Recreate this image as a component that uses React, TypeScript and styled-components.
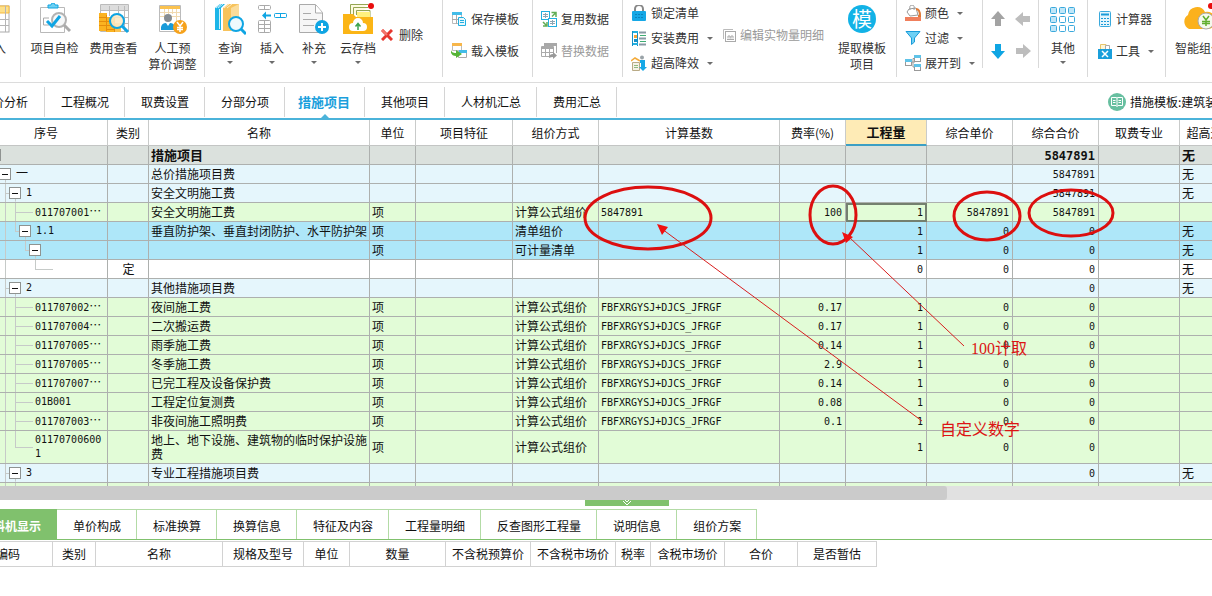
import React from "react";
import styled, { createGlobalStyle, css } from "styled-components";

const LINE = "#adb0ae";
const BLUE = "#0fa5e3";
const MONO = `"DejaVu Sans Mono", "Noto Sans CJK SC", monospace`;

const Global = createGlobalStyle`
  *, *::before, *::after { box-sizing: border-box; }
  body {
    margin: 0;
    overflow: hidden;
    background: #fff;
    color: #111;
    font: 12px/16px "Noto Sans CJK SC", "Liberation Sans", sans-serif;
  }
  button { font: inherit; color: inherit; background: none; border: 0; padding: 0; cursor: pointer; }
`;

const Shell = styled.main`
  display: flex;
  flex-direction: column;
  margin-left: -36px;
  overflow: hidden;
`;

/* ---------- ribbon ---------- */

const Ribbon = styled.header`
  display: flex;
  height: 83px;
  border-bottom: 1px solid #dcdcdc;
  color: #333;
`;

const Group = styled.section<{ $w: number; $pad?: number; $short?: boolean }>`
  display: flex;
  flex: none;
  width: ${(p) => p.$w}px;
  height: ${(p) => (p.$short ? 68 : 77)}px;
  padding-left: ${(p) => p.$pad ?? 0}px;
  border-right: 1px solid #d9d9d9;
  white-space: nowrap;
`;

const LastGroup = styled(Group)`
  border-right: 0;
`;

const BigButton = styled.button<{ $w: number }>`
  display: flex;
  flex: none;
  flex-direction: column;
  align-items: center;
  justify-content: flex-start;
  width: ${(p) => p.$w}px;
  padding-top: 3px;
  text-align: center;
  svg.pic { flex: none; margin-bottom: 5px; }
`;

const Stack = styled.div<{ $gap: number; $top: number; $w?: number }>`
  display: flex;
  flex: none;
  flex-direction: column;
  align-items: flex-start;
  gap: ${(p) => p.$gap}px;
  width: ${(p) => (p.$w ? `${p.$w}px` : "auto")};
  padding-top: ${(p) => p.$top}px;
`;

const SmallButton = styled.button<{ $gap?: number }>`
  display: flex;
  align-items: center;
  gap: ${(p) => p.$gap ?? 4}px;
  height: 16px;
  &:disabled { color: #9a9a9a; }
`;

const Caret = styled.span<{ $below?: boolean }>`
  width: 0;
  height: 0;
  border: 3px solid transparent;
  border-top-color: #6c6c6c;
  border-bottom: 0;
  ${(p) => (p.$below ? "margin-top: 5px;" : "margin-left: 4px;")}
`;

const MoveGrid = styled.div`
  display: grid;
  grid-template-columns: 25px 25px;
  grid-template-rows: 32px 32px;
  padding-top: 3px;
  button { display: flex; align-items: center; justify-content: center; }
`;

/* ---------- page tabs ---------- */

const TabBar = styled.nav`
  display: flex;
  height: 37px;
  padding-top: 4px;
  border-bottom: 2px solid #4bb3da;
`;

const Tab = styled.button<{ $active?: boolean }>`
  position: relative;
  flex: none;
  height: 30px;
  padding: 0 15px 0 16px;
  border-right: 1px solid #d4d4d4;
  &:first-child { padding-right: 16px; }
  ${(p) =>
    p.$active &&
    css`
      padding: 0 14px 0 13px;
      color: #1b9fdc;
      font-size: 13px;
      font-weight: 700;
      &::after {
        content: "";
        position: absolute;
        left: calc(50% - 4px);
        bottom: -1px;
        border: 4px solid transparent;
        border-top: 0;
        border-bottom-color: #4bb3da;
      }
    `}
`;

const Template = styled.div`
  display: flex;
  align-items: center;
  gap: 4px;
  width: 104px;
  height: 30px;
  margin-left: auto;
  overflow: hidden;
  white-space: nowrap;
  svg { flex: none; }
`;

/* ---------- main grid ---------- */

const GridView = styled.section`
  position: relative;
  height: 366px;
  overflow: hidden;
`;

const Grid = styled.table`
  width: 100%;
  min-width: 1551px;
  table-layout: fixed;
  border-collapse: separate;
  border-spacing: 0;
`;

const HeadCell = styled.th<{ $on?: boolean }>`
  height: 26px;
  padding: 0;
  overflow: hidden;
  border-right: 1px solid #c9cbca;
  border-bottom: 1px solid #c3c5c4;
  font-weight: 400;
  white-space: nowrap;
  ${(p) =>
    p.$on &&
    css`
      background: #feebb6;
      border-bottom: 2px solid #3d9fc4;
      font-size: 13px;
      font-weight: 700;
    `}
`;

type Tone = "gray" | "pale" | "green" | "blue" | "white";
const tones: Record<Tone, string> = {
  gray: "#dbe1dd",
  pale: "#e5f6fc",
  green: "#e2fcd7",
  blue: "#aee7f9",
  white: "#ffffff",
};

const Row = styled.tr<{ $tone: Tone; $tall?: boolean }>`
  height: ${(p) => (p.$tall ? 33 : 19)}px;
  background: ${(p) => tones[p.$tone]};
  font-size: ${(p) => (p.$tone === "gray" ? 13 : 12)}px;
  font-weight: ${(p) => (p.$tone === "gray" ? 700 : 400)};
`;

const Cell = styled.td<{ $align?: "right" | "center"; $selected?: boolean }>`
  padding: ${(p) => (p.$align === "right" ? "0 3px 0 2px" : "0 1px 0 2px")};
  overflow: hidden;
  border-right: 1px solid ${LINE};
  border-bottom: 1px solid ${LINE};
  line-height: 14px;
  text-align: ${(p) => p.$align ?? "left"};
  ${(p) => p.$selected && "outline: 2px solid #74806f; outline-offset: -2px;"}
`;

const Mono = styled.span`
  font-family: ${MONO};
  font-size: 10px;
  ${Row}[data-total="true"] & { font-size: 12px; }
`;

/* Each guide is a one-pixel line: left, top, width, height. */
type Guide = [string, string, string, string];

const TreeCell = styled(Cell)<{ $indent: number; $guides: Guide[] }>`
  padding: 0 0 0 ${(p) => p.$indent}px;
  background-image: ${(p) =>
    p.$guides.length
      ? p.$guides.map(() => "linear-gradient(#c6cac8, #c6cac8)").join(",")
      : "none"};
  background-repeat: no-repeat;
  background-position: ${(p) => p.$guides.map((g) => `${g[0]} ${g[1]}`).join(",") || "0 0"};
  background-size: ${(p) => p.$guides.map((g) => `${g[2]} ${g[3]}`).join(",") || "auto"};
`;

const TreeLine = styled.div`
  display: flex;
  align-items: center;
  gap: 5px;
  font-family: ${MONO};
  font-size: 10px;
`;

const Toggle = styled.button`
  flex: none;
  width: 12px;
  height: 12px;
  border: 1px solid #8f9391;
  background: linear-gradient(#111, #111) center / 6px 1px no-repeat #fff;
`;

const Han = styled.span`
  font-family: "Noto Sans CJK SC", sans-serif;
  font-size: 12px;
`;

const Marks = styled.svg`
  position: absolute;
  left: 0;
  top: 0;
  pointer-events: none;
`;

const Note = styled.span<{ $x: number; $y: number }>`
  position: absolute;
  left: ${(p) => p.$x}px;
  top: ${(p) => p.$y}px;
  color: #dc1414;
  font-family: "Liberation Serif", "Noto Sans CJK SC", serif;
  font-size: 16px;
  line-height: 20px;
  white-space: nowrap;
`;

const ScrollTrack = styled.div`
  height: 14px;
  padding-left: 16px;
  background: #e1e1e1;
`;

const ScrollThumb = styled.div`
  width: calc(100% - 265px);
  min-width: 40px;
  height: 14px;
  border-radius: 0 3px 3px 0;
  background: #cbcbcb;
`;

/* ---------- detail panel ---------- */

const Splitter = styled.button`
  display: flex;
  justify-content: center;
  width: 84px;
  height: 6px;
  margin-left: calc(50% - 3px);
  background: #80c16d;
`;

const DetailTabs = styled.nav`
  display: flex;
  height: 31px;
  margin-top: 3px;
  border-bottom: 1px solid #80c16d;
`;

const DetailTab = styled.button<{ $active?: boolean }>`
  flex: none;
  height: 30px;
  padding: 3px 15px 0 16px;
  border-top: 1px solid #b3dba6;
  border-right: 1px solid #b3dba6;
  ${(p) =>
    p.$active &&
    css`
      padding-left: 17px;
      background: #80c16d;
      border-color: #80c16d;
      color: #fff;
      font-weight: 700;
    `}
`;

const DetailGrid = styled.table`
  width: 913px;
  margin-top: 1px;
  table-layout: fixed;
  border-collapse: separate;
  border-spacing: 0;
`;

const DetailHead = styled.th`
  height: 26px;
  padding: 0;
  border: 1px solid #d2d2d2;
  border-left: 0;
  font-weight: 400;
  white-space: nowrap;
`;

/* ---------- icons ---------- */

const Pic = ({ w = 32, h = 32, children }: { w?: number; h?: number; children: React.ReactNode }) => (
  <svg className="pic" width={w} height={h} viewBox={`0 0 ${w} ${h}`} fill="none" aria-hidden="true">
    {children}
  </svg>
);

const ImportIcon = () => (
  <Pic>
    <rect x="3" y="3" width="28" height="26" fill="#fff" stroke="#aaa" />
    <path d="M3 3h28v7H3z" fill="#fde08a" stroke="#f5b93e" />
    <path d="M3 16.500h28M3 22.500h28M12.500 10v19M21.500 3v26M27.500 3v26" stroke="#b5b5b5" />
  </Pic>
);

const CheckIcon = () => (
  <Pic>
    <path d="M1.500 4.500h24v25h-24z" stroke="#b9b9b9" />
    <path d="M9 2h3a2 2 0 0 1 4 0h3v3H9z" fill="#6fd0f2" stroke={BLUE} />
    <path d="M10 15H4.500v7H10" stroke="#aaa" />
    <circle cx="20" cy="17" r="7" fill="#f6f8f9" stroke="#b3b3b3" strokeWidth="2" />
    <path d="M25 22l6 6" stroke="#aaa" strokeWidth="3" />
    <path d="M8 18l5 5 8-10" stroke={BLUE} strokeWidth="3" />
  </Pic>
);

const CostIcon = () => (
  <Pic>
    <path d="M2.500 1.500h28v27h-28z" fill="#fff" stroke="#bbb" />
    <path d="M3 2h27v5H3z" fill="#ddd" />
    <path d="M3 7.500h27M10 14.500h20M20 20.500h10M11.500 3v10M20.500 3v10M26.500 3v25" stroke="#bbb" />
    <path d="M1 10h8v18H1z" fill="#fbb320" />
    <path d="M8 14h8v15H8z" fill="#fbb320" />
    <path d="M16 20h7v9h-7z" fill="#fbc24e" />
    <path d="M1 14.500h8M1 18.500h8M1 22.500h8M8 18.500h8M8 22.500h8M8 26.500h8M8.500 12v16M16.500 15v14" stroke="#e58d0c" />
    <circle cx="19" cy="18" r="7" fill="#fde9c4" fillOpacity=".9" stroke={BLUE} strokeWidth="2" />
    <path d="M24 23l6 6" stroke={BLUE} strokeWidth="3" />
  </Pic>
);

const LaborIcon = () => (
  <Pic>
    <path d="M2.500 2.500h21v26h-21z" fill="#fff" stroke="#bbb" />
    <path d="M3 3h20v3H3z" fill="#fbc24e" />
    <path d="M3 9.500h20M3 13.500h20M7.500 6v9M11.500 6v5M15.500 6v5M19.500 6v12" stroke="#f0d9b0" />
    <circle cx="11" cy="15" r="4" fill="#878d92" />
    <path d="M4 27v-3q1-4 5-4l2 3 2-3q4 0 5 4v3z" fill="#199bd9" />
    <circle cx="23" cy="24" r="7" fill="#f6a21c" />
    <path d="M20 19l3 4 3-4M23 23v6M20 24.500h6M20 26.500h6" stroke="#fff" strokeWidth="1.500" />
  </Pic>
);

const QueryIcon = () => (
  <Pic>
    <path d="M1 5l5-4h5L7 5v22H1z" fill="#1cb5e8" />
    <path d="M2 5l5-4M4 5l5-4M5.500 6v20" stroke="#c9effb" />
    <path d="M9 5l5-4h11v18l-4 9H9z" fill="#f7c35c" />
    <path d="M10 5l5-4M13 5l5-4" stroke="#fdebc4" />
    <path d="M17 5l8-4v23l-8 4z" fill="#fbdc9a" />
    <circle cx="22" cy="21" r="7" fill="#eef9fd" stroke={BLUE} strokeWidth="2" />
    <path d="M27 26l5 5" stroke={BLUE} strokeWidth="3" />
  </Pic>
);

const InsertIcon = () => (
  <Pic>
    <rect x="2.500" y="2.500" width="12" height="4" rx="1" stroke="#aaa" />
    <path d="M8.500 3v4" stroke="#aaa" />
    <path d="M6 12.500l4-4v3h5v2h-5v3z" fill={BLUE} />
    <rect x="18.500" y="10.500" width="12" height="4" rx="1" stroke={BLUE} />
    <path d="M24.500 11v4" stroke={BLUE} />
    <rect x="2.500" y="17.500" width="12" height="12" rx="1" stroke="#aaa" />
    <path d="M2 21.500h13M2 25.500h13M8.500 17v13" stroke="#aaa" />
  </Pic>
);

const AddIcon = () => (
  <Pic>
    <path d="M1.500 1.500h16l7 8v20h-23z" fill="#f6f6f6" stroke="#aaa" />
    <path d="M17.500 2v8h7" fill="#fff" stroke="#aaa" />
    <path d="M5 10.500h8M5 16.500h14M5 22.500h11" stroke="#aaa" />
    <circle cx="24" cy="24" r="7" fill={BLUE} />
    <path d="M20 24h8M24 20v8" stroke="#fff" strokeWidth="2" />
  </Pic>
);

const CloudIcon = () => (
  <Pic>
    <path d="M8.500 12V1.500H26M11.500 12V4.500H26M14.500 12V7.500H28V14" fill="#fffbe0" stroke="#95a653" />
    <path d="M15 9h13v6H15z" fill="#fff17d" />
    <path d="M1 11h10l3 3h17v17H1z" fill="#fbb516" />
    <path d="M11 28a4 4 0 0 1 0-8 5 5 0 0 1 10 0 4 4 0 0 1 0 8z" fill="#fff" />
    <path d="M16 27v-6M13.500 23.500l2.500-3 2.500 3" stroke="#3ca34d" strokeWidth="1.500" />
    <circle cx="29" cy="3" r="3" fill="#e80d0d" />
  </Pic>
);

const DeleteIcon = () => (
  <Pic w={12} h={12}>
    <path d="M1 1l10 10M11 1L1 11" stroke="#e6362e" strokeWidth="3" />
    <path d="M6 6L1 1" stroke="#f47a70" strokeWidth="2" />
  </Pic>
);

const SaveTplIcon = () => (
  <Pic w={16} h={16}>
    <path d="M1.500 1.500h9v11h-9z" fill="#fff" stroke="#bbb" />
    <path d="M1 1h10v3H1z" fill="#43bce8" />
    <path d="M1 8.500h7M5.500 4v9" stroke="#aaa" />
    <path d="M7.500 6.500h5l2 2v6h-7z" fill="#e9f8fd" stroke="#22afe0" />
    <path d="M9 9.500h4M9 11.500h4" stroke="#22afe0" />
  </Pic>
);

const LoadTplIcon = () => (
  <Pic w={16} h={16}>
    <path d="M1.500 1.500h9v6h-9z" fill="#fff" stroke="#bbb" />
    <path d="M1 0h10v3H1z" fill="#f7b64a" />
    <path d="M7.500 8.500h8v6h-8z" fill="#fff" stroke="#aaa" />
    <path d="M8 7h8v3H8z" fill="#43bce8" />
    <path d="M0 6c0 3 2 4 5 4V7l6 4-6 4v-2c-4 0-6-3-5-7z" fill="#55b336" />
  </Pic>
);

const ReuseIcon = () => (
  <Pic w={16} h={16}>
    <rect x=".5" y=".5" width="8" height="8" fill="#fff" stroke="#22afe0" />
    <rect x="7.500" y="7.500" width="8" height="8" fill="#fff" stroke="#22afe0" />
    <path d="M2 3.500h5M2 5.500h5M9 10.500h5M9 12.500h5M4.500 2v5M11.500 9v5" stroke="#8fa6b3" />
    <path d="M10.500 1.500H15V6M15 1.500l-4 4M2 11l3.500 3.500M6 11v4H2" stroke="#62ad55" strokeWidth="1.500" />
  </Pic>
);

const ReplaceIcon = () => (
  <Pic w={16} h={16}>
    <path d="M.5 3.500h12v10H.5z" fill="#fff" stroke="#aaa" />
    <path d="M3 .5h12.500V10" stroke="#aaa" />
    <path d="M3 0h13v3H3zM0 4h13v2H0z" fill="#a8a8a8" />
    <path d="M1 9.500h11M4.500 4v9M8.500 4v9" stroke="#aaa" />
    <path d="M8 15q0-4 4-4V9l4 3.500-4 3.500v-2q-2 0-4 1z" fill="#999" />
  </Pic>
);

const LockIcon = () => (
  <Pic w={16} h={16}>
    <path d="M4 7V4a4 4 0 0 1 8 0v3" stroke="#888" strokeWidth="2" />
    <rect x="1" y="6" width="14" height="10" rx="1" fill="#16a8e6" />
    <path d="M4 9.500h8M4 12.500h8" stroke="#0c84bd" strokeDasharray="2 1" />
  </Pic>
);

const InstallIcon = () => (
  <Pic w={16} h={16}>
    <path d="M1.500 1v15M6.500 1v15" stroke="#168fc6" />
    <path d="M2 2h5M2 14h5" stroke="#22afe0" strokeWidth="2" />
    <path d="M3 5h3v3H3z" fill="#f7a63a" />
    <path d="M3 9h3v3H3z" fill="#168fc6" />
    <path d="M8 2.500h7M8 8.500h7M8 14.500h7" stroke="#8a9aa5" strokeWidth="2" />
    <path d="M9 5.500h6M9 11.500h6" stroke="#3fae74" />
  </Pic>
);

const TallIcon = () => (
  <Pic w={16} h={16}>
    <path d="M1.500 7.500h7v8h-7z" fill="#f5f1e6" stroke="#b9aa86" />
    <path d="M0 6l4-3 5 3" stroke="#f4ab3a" strokeWidth="1.500" />
    <path d="M3 10.500h4M3 12.500h4" stroke="#8fb980" />
    <circle cx="11" cy="2.500" r="2" fill="#9aa3a8" />
    <path d="M9 5h5v3H9zM10 8h4v4h2l-4 4-4-4h2z" fill="#16a8e6" />
  </Pic>
);

const EditQtyIcon = () => (
  <Pic w={13} h={13}>
    <path d="M10 .5H.5V10" stroke="#bbb" />
    <rect x="2.500" y="2.500" width="10" height="10" stroke="#aaa" />
    <path d="M5 9.500V7h2v2.500M8 9.500V7h2v2.500M4 10.500h7" stroke="#aaa" />
  </Pic>
);

const Disc = styled.span`
  display: grid;
  place-items: center;
  width: 28px;
  height: 28px;
  margin: 2px 0 7px;
  border-radius: 50%;
  background: #12b2e6;
  color: #fff;
  font-size: 20px;
  line-height: 28px;
`;

const ColorIcon = () => (
  <Pic w={16} h={16}>
    <path d="M4 4l7-1 2 7-8 1-3-4z" fill="#fff" stroke="#999" />
    <path d="M5 5q-1-5 2-5t2 5" stroke="#999" />
    <path d="M11 4q4 0 4 7h-2" stroke="#e07a35" strokeWidth="2" />
    <path d="M0 12h16v4H0z" fill="#f07f5c" />
  </Pic>
);

const FilterIcon = () => (
  <Pic w={16} h={16}>
    <path d="M1 1.500h14L9.500 8v4l-3 2.500V8z" fill="#6fd0f4" stroke="#199bd9" />
  </Pic>
);

const ExpandIcon = () => (
  <Pic w={16} h={16}>
    <path d="M6 7h4M8 3.500v8.500M8 3.500h2M8 12h2" stroke="#999" />
    <rect x=".5" y="4.500" width="6" height="6" fill="#fff" stroke="#999" />
    <rect x="9.500" y=".5" width="6" height="6" fill="#fff" stroke="#999" />
    <rect x="9.500" y="9.500" width="6" height="6" fill="#fff" stroke="#999" />
    <path d="M0 4h7v3H0zM9 0h7v3H9zM9 9h7v3H9z" fill="#5fc3e8" />
  </Pic>
);

const MoveArrow = ({ turn, color }: { turn: number; color: string }) => (
  <Pic w={16} h={16}>
    <path d="M8 0l7 8h-4v7H5V8H1z" fill={color} transform={`rotate(${turn} 8 8)`} />
  </Pic>
);

const TilesIcon = () => (
  <Pic w={26} h={32}>
    {[0, 9, 18].map((y) =>
      [0, 9, 18].map((x) => (
        <rect
          key={`${x}-${y}`}
          x={x + 0.5}
          y={y + 4.5}
          width="6"
          height="6"
          rx="1"
          fill={x === 0 || y === 0 ? "#bfe6f8" : "#fff"}
          stroke="#3aa9dc"
        />
      )),
    )}
  </Pic>
);

const CalcIcon = () => (
  <Pic w={14} h={16}>
    <rect x="1.500" y=".5" width="11" height="15" rx="1" fill="#e4f5fc" stroke="#3aa9dc" />
    <path d="M3 3.500h8" stroke="#199bd9" strokeWidth="2" />
    <path d="M3 7.500h8M3 10.500h8M3 13.500h8" stroke="#199bd9" strokeDasharray="2 1" />
  </Pic>
);

const ToolIcon = () => (
  <Pic w={14} h={16}>
    <path d="M2.500 6V1.500H8V6" fill="#fff7d6" stroke="#e8c56a" />
    <path d="M7.500 6V2.500h4V6" fill="#fff" stroke="#aaa" />
    <path d="M0 6h14v10H0z" fill="#1a9fdb" />
    <path d="M4 8l6 6M10 8l-6 6" stroke="#fff" strokeWidth="1.500" />
  </Pic>
);

const SmartIcon = () => (
  <Pic w={36}>
    <path d="M8 26a8 8 0 0 1-1-14 9 9 0 0 1 17-3 8 8 0 0 1 4 17z" fill="#fbb11c" />
    <circle cx="25" cy="18" r="8" fill="#f5f9ec" stroke="#aaa" />
    <path d="M22 13l3 4 3-4M25 17v6M21 18.500h8M21 20.500h8" stroke="#5fae2e" strokeWidth="1.500" />
    <circle cx="30" cy="3" r="3" fill="#e80d0d" />
  </Pic>
);

const BookIcon = () => (
  <svg width="18" height="18" viewBox="0 0 18 18" fill="none" aria-hidden="true">
    <circle cx="9" cy="9" r="9" fill="#67bfa0" />
    <path d="M9 5v8.500M3.500 4.500H8L9 5l1-.5h4.500v8H10l-1 1-1-1H3.500z" stroke="#fff" />
    <path d="M5 7.500h2.500M5 9.500h2.500M10.500 7.500H13M10.500 9.500H13" stroke="#fff" />
  </svg>
);

/* ---------- data ---------- */

const pageTabs = ["造价分析", "工程概况", "取费设置", "分部分项", "措施项目", "其他项目", "人材机汇总", "费用汇总"];
const detailTabs = ["工料机显示", "单价构成", "标准换算", "换算信息", "特征及内容", "工程量明细", "反查图形工程量", "说明信息", "组价方案"];

const columns: [string, number?][] = [
  ["", 21], ["序号", 123], ["类别", 41], ["名称", 221], ["单位", 46], ["项目特征", 97],
  ["组价方式", 86], ["计算基数", 181], ["费率(%)", 66], ["工程量", 81], ["综合单价", 86],
  ["综合合价", 86], ["取费专业", 81], ["超高过高类别", 86], ["备注"],
];

const detailColumns: [string, number][] = [
  ["编码", 89], ["类别", 43], ["名称", 127], ["规格及型号", 81], ["单位", 46], ["数量", 96],
  ["不含税预算价", 85], ["不含税市场价", 85], ["税率", 35], ["含税市场价", 74], ["合价", 73], ["是否暂估", 79],
];

const trunk: Guide = ["20px", "0", "1px", "100%"];
const branch: Guide = ["30px", "0", "1px", "100%"];
const leaf: Guide = ["30px", "50%", "18px", "1px"];
const half = (x: number): Guide => [`${x}px`, "0", "1px", "50%"];
const stub = (x: number): Guide => [`${x}px`, "50%", "5px", "1px"];
const below = (x: number): Guide => [`${x}px`, "100%", "1px", "20%"];

interface Item {
  tone: Tone;
  indent?: number;
  guides?: Guide[];
  toggle?: boolean;
  code?: string;
  more?: boolean;
  kind?: string;
  name?: string;
  unit?: string;
  mode?: string;
  base?: string;
  rate?: string;
  qty?: string;
  price?: string;
  total?: string;
  high?: string;
  tall?: boolean;
  selected?: boolean;
}

const FORMULA = "FBFXRGYSJ+DJCS_JFRGF";
const fee = (code: string, name: string, rate: string, extra: Partial<Item> = {}): Item => ({
  tone: "green", indent: 50, guides: [trunk, branch, leaf], code, more: true, name, unit: "项",
  mode: "计算公式组价", base: FORMULA, rate, qty: "1", price: "0", total: "0", ...extra,
});

const items: Item[] = [
  { tone: "gray", indent: 4, toggle: true, name: "措施项目", total: "5847891", high: "无" },
  { tone: "pale", indent: 14, guides: [below(20)], toggle: true, code: "一", name: "总价措施项目费", total: "5847891", high: "无" },
  { tone: "pale", indent: 24, guides: [trunk, stub(20), below(30)], toggle: true, code: "1", name: "安全文明施工费", total: "5847891", high: "无" },
  fee("011707001", "安全文明施工费", "100", { base: "5847891", price: "5847891", total: "5847891", selected: true }),
  { tone: "blue", indent: 34, guides: [trunk, half(30), stub(30), below(40)], toggle: true, code: "1.1", name: "垂直防护架、垂直封闭防护、水平防护架", unit: "项", mode: "清单组价", qty: "1", price: "0", total: "0", high: "无" },
  { tone: "blue", indent: 44, guides: [trunk, half(40), stub(40), below(50)], toggle: true, unit: "项", mode: "可计量清单", qty: "1", price: "0", total: "0", high: "无" },
  { tone: "white", guides: [trunk, half(50), ["50px", "50%", "18px", "1px"]], kind: "定", qty: "0", price: "0", total: "0", high: "无" },
  { tone: "pale", indent: 24, guides: [trunk, stub(20), below(30)], toggle: true, code: "2", name: "其他措施项目费", total: "0", high: "无" },
  fee("011707002", "夜间施工费", "0.17"),
  fee("011707004", "二次搬运费", "0.17"),
  fee("011707005", "雨季施工费", "0.14"),
  fee("011707005", "冬季施工费", "2.9"),
  fee("011707007", "已完工程及设备保护费", "0.14"),
  fee("01B001", "工程定位复测费", "0.08", { more: false }),
  fee("011707003", "非夜间施工照明费", "0.1"),
  fee("011707006001", "地上、地下设施、建筑物的临时保护设施费", "", { more: false, base: "", tall: true, guides: [trunk, half(30), leaf] }),
  { tone: "pale", indent: 24, guides: [trunk, stub(20), below(30)], toggle: true, code: "3", name: "专业工程措施项目费", total: "0", high: "无" },
  { tone: "green", guides: [trunk, branch] },
];

const CodeText = styled.span`
  max-width: 72px;
  overflow-wrap: anywhere;
`;

const ItemRow = ({ it }: { it: Item }) => (
  <Row $tone={it.tone} $tall={it.tall} data-total={it.tone === "gray"}>
    <Cell />
    <TreeCell $indent={it.indent ?? 0} $guides={it.guides ?? []}>
      <TreeLine>
        {it.toggle && <Toggle aria-label="折叠" />}
        {it.code && (
          <CodeText>
            {it.code === "一" ? <Han>{it.code}</Han> : it.code}
            {it.more && <Han>…</Han>}
          </CodeText>
        )}
      </TreeLine>
    </TreeCell>
    <Cell $align="center">{it.kind}</Cell>
    <Cell>{it.name}</Cell>
    <Cell>{it.unit}</Cell>
    <Cell />
    <Cell>{it.mode}</Cell>
    <Cell><Mono>{it.base}</Mono></Cell>
    <Cell $align="right"><Mono>{it.rate}</Mono></Cell>
    <Cell $align="right" $selected={it.selected}><Mono>{it.qty}</Mono></Cell>
    <Cell $align="right"><Mono>{it.price}</Mono></Cell>
    <Cell $align="right"><Mono>{it.total}</Mono></Cell>
    <Cell />
    <Cell>{it.high}</Cell>
    <Cell />
  </Row>
);

const Annotations = () => (
  <>
    <Marks width="1248" height="366" viewBox="-36 120 1248 366" fill="none" aria-hidden="true">
      <g stroke="#dc0f0f" strokeWidth="3">
        <ellipse cx="648" cy="218" rx="63" ry="31" />
        <ellipse cx="833" cy="215" rx="23" ry="29" />
        <ellipse cx="987" cy="216" rx="33" ry="24" />
        <ellipse cx="1071" cy="213" rx="42" ry="23" />
      </g>
      <path d="M922 421L662 229M964 346L849 237" stroke="#d81e1e" />
      <path d="M657 224l11 3-6 8zM842 232l11 5-7 6z" fill="#f01010" />
    </Marks>
    <Note $x={1007} $y={219}>100计取</Note>
    <Note $x={976} $y={300}>自定义数字</Note>
  </>
);

export default function App() {
  return (
    <Shell>
      <Global />
      <Ribbon>
        <Group $w={57} $pad={10}>
          <BigButton $w={40}><ImportIcon />导入</BigButton>
        </Group>
        <Group $w={184} $pad={4}>
          <BigButton $w={59}><CheckIcon />项目自检</BigButton>
          <BigButton $w={59}><CostIcon />费用查看</BigButton>
          <BigButton $w={59}><LaborIcon />人工预<br />算价调整</BigButton>
        </Group>
        <Group $w={238} $pad={4}>
          <BigButton $w={42}><QueryIcon />查询<Caret $below /></BigButton>
          <BigButton $w={42}><InsertIcon />插入<Caret $below /></BigButton>
          <BigButton $w={42}><AddIcon />补充<Caret $below /></BigButton>
          <BigButton $w={46}><CloudIcon />云存档<Caret $below /></BigButton>
          <Stack $gap={0} $top={27} $w={50}>
            <SmallButton $gap={6}><DeleteIcon />删除</SmallButton>
          </Stack>
        </Group>
        <Group $w={90} $pad={8}>
          <Stack $gap={16} $top={11}>
            <SmallButton><SaveTplIcon />保存模板</SmallButton>
            <SmallButton><LoadTplIcon />载入模板</SmallButton>
          </Stack>
        </Group>
        <Group $w={90} $pad={8}>
          <Stack $gap={16} $top={11}>
            <SmallButton><ReuseIcon />复用数据</SmallButton>
            <SmallButton disabled><ReplaceIcon />替换数据</SmallButton>
          </Stack>
        </Group>
        <Group $w={274} $pad={8}>
          <Stack $gap={9} $top={5} $w={92}>
            <SmallButton><LockIcon />锁定清单</SmallButton>
            <SmallButton><InstallIcon />安装费用<Caret /></SmallButton>
            <SmallButton><TallIcon />超高降效<Caret /></SmallButton>
          </Stack>
          <Stack $gap={0} $top={27} $w={107}>
            <SmallButton disabled><EditQtyIcon />编辑实物量明细</SmallButton>
          </Stack>
          <BigButton $w={64}><Disc>模</Disc>提取模板<br />项目</BigButton>
        </Group>
        <Group $w={86} $pad={8} $short>
          <Stack $gap={9} $top={5}>
            <SmallButton><ColorIcon />颜色<Caret /></SmallButton>
            <SmallButton><FilterIcon />过滤<Caret /></SmallButton>
            <SmallButton><ExpandIcon />展开到<Caret /></SmallButton>
          </Stack>
        </Group>
        <Group $w={56} $pad={2} $short>
          <MoveGrid>
            <button aria-label="上移"><MoveArrow turn={0} color="#a3a3a3" /></button>
            <button aria-label="左移"><MoveArrow turn={-90} color="#bdbdbd" /></button>
            <button aria-label="下移"><MoveArrow turn={180} color={BLUE} /></button>
            <button aria-label="右移"><MoveArrow turn={90} color="#bdbdbd" /></button>
          </MoveGrid>
        </Group>
        <Group $w={49}>
          <BigButton $w={48}><TilesIcon />其他<Caret $below /></BigButton>
        </Group>
        <Group $w={78} $pad={10}>
          <Stack $gap={16} $top={11}>
            <SmallButton><CalcIcon />计算器</SmallButton>
            <SmallButton><ToolIcon />工具<Caret /></SmallButton>
          </Stack>
        </Group>
        <LastGroup $w={70} $pad={2}>
          <BigButton $w={62}><SmartIcon />智能组价</BigButton>
        </LastGroup>
      </Ribbon>

      <TabBar>
        {pageTabs.map((t) => (
          <Tab key={t} $active={t === "措施项目"}>{t}</Tab>
        ))}
        <Template><BookIcon />措施模板:建筑装饰</Template>
      </TabBar>

      <GridView>
        <Grid>
          <colgroup>
            {columns.map(([label, w]) => <col key={label} width={w} />)}
          </colgroup>
          <thead>
            <tr>
              {columns.map(([label]) => (
                <HeadCell key={label} $on={label === "工程量"}>{label}</HeadCell>
              ))}
            </tr>
          </thead>
          <tbody>
            {items.map((it, i) => <ItemRow key={i} it={it} />)}
          </tbody>
        </Grid>
        <Annotations />
      </GridView>
      <ScrollTrack><ScrollThumb /></ScrollTrack>

      <Splitter aria-label="收起面板">
        <svg width="10" height="6" viewBox="0 0 10 6" fill="none" aria-hidden="true">
          <path d="M1 1l4 4 4-4M3 0l2 2 2-2" stroke="#fff" />
        </svg>
      </Splitter>
      <DetailTabs>
        {detailTabs.map((t, i) => (
          <DetailTab key={t} $active={i === 0}>{t}</DetailTab>
        ))}
      </DetailTabs>
      <DetailGrid>
        <colgroup>
          {detailColumns.map(([label, w]) => <col key={label} width={w} />)}
        </colgroup>
        <thead>
          <tr>{detailColumns.map(([label]) => <DetailHead key={label}>{label}</DetailHead>)}</tr>
        </thead>
      </DetailGrid>
    </Shell>
  );
}
